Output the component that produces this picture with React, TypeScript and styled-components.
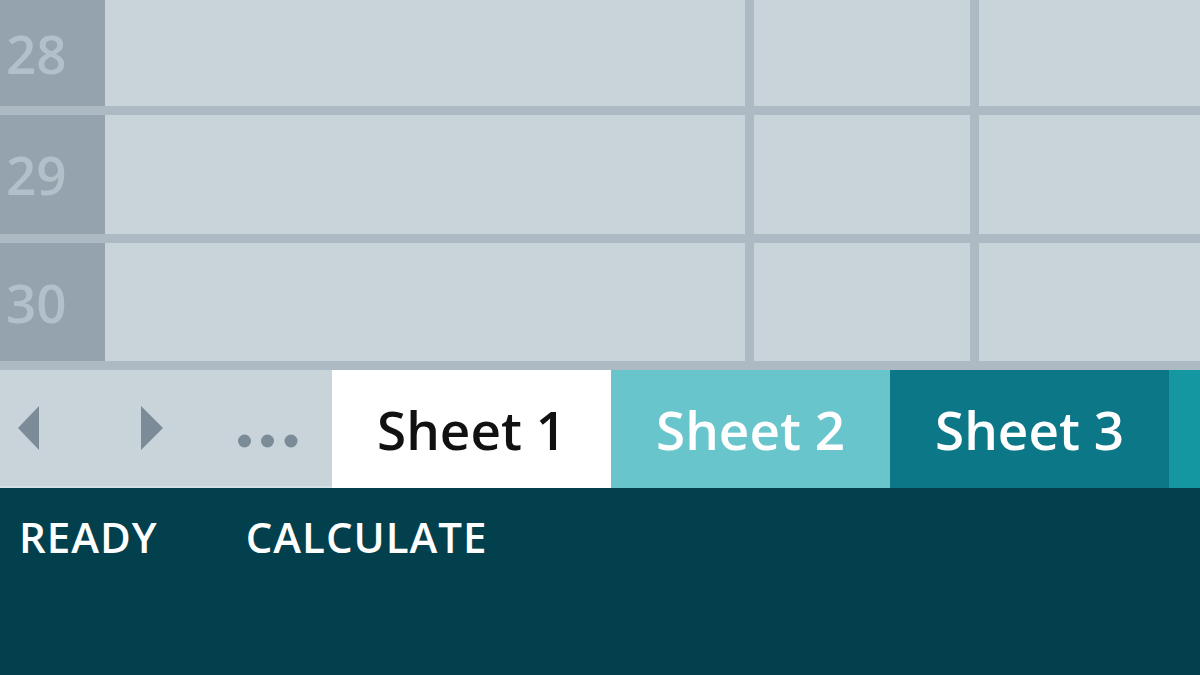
import React from 'react';
import styled, { createGlobalStyle } from 'styled-components';

const GlobalStyle = createGlobalStyle`
  html, body {
    margin: 0;
    padding: 0;
    overflow: hidden;
  }
  body {
    font-family: "Open Sans", "Liberation Sans", sans-serif;
  }
`;

const Page = styled.div`
  width: 1200px;
  height: 675px;
  display: flex;
  flex-direction: column;
  background-color: #01404c;
`;

const Grid = styled.div`
  display: grid;
  grid-template-columns: 105px 640px 225px 1fr;
  grid-template-rows: 106px 119px 118px;
  row-gap: 9px;
  padding-bottom: 9px;
  background-color: #adbac4;
`;

const RowHeader = styled.div`
  display: flex;
  align-items: center;
  padding-left: 6px;
  background-color: #94a3ad;
  color: #b3c0c9;
  font-size: 53px;
  font-weight: 600;
`;

const Cell = styled.div<{ $divider?: boolean }>`
  background-color: #c8d3da;
  border-left: ${({ $divider }) => ($divider ? '9px solid #adbac4' : 'none')};
`;

const TabBar = styled.div`
  display: flex;
  height: 118px;
`;

const Nav = styled.div`
  width: 332px;
  display: flex;
  align-items: center;
  padding-left: 18px;
  box-sizing: border-box;
  background-color: #c8d3da;
  border-bottom: 2px solid #d6dfe4;
`;

const NavIcon = styled.svg<{ $offset: number }>`
  display: block;
  margin-left: ${({ $offset }) => $offset}px;
  fill: #7b8c98;
`;

const Tab = styled.div<{ $bg: string; $fg: string }>`
  width: 279px;
  display: flex;
  align-items: center;
  justify-content: center;
  background-color: ${({ $bg }) => $bg};
  color: ${({ $fg }) => $fg};
  font-size: 53px;
  font-weight: 600;
`;

const TabRest = styled.div`
  flex: 1;
  background-color: #1597a2;
`;

const StatusBar = styled.div`
  flex: 1;
  display: flex;
  align-items: flex-start;
  padding: 20px 0 0 19px;
  color: #ffffff;
  font-size: 42px;
  font-weight: 600;
  letter-spacing: 1px;
`;

const StatusItem = styled.span`
  margin-right: 88px;
`;

const rows = ['28', '29', '30'];

const App = () => (
  <>
    <GlobalStyle />
    <Page>
      <Grid>
        {rows.map((n) => (
          <React.Fragment key={n}>
            <RowHeader>{n}</RowHeader>
            <Cell />
            <Cell $divider />
            <Cell $divider />
          </React.Fragment>
        ))}
      </Grid>
      <TabBar>
        <Nav>
          <NavIcon $offset={0} width="21" height="44" viewBox="0 0 21 44">
            <polygon points="0,22 21,0 21,44" />
          </NavIcon>
          <NavIcon $offset={102} width="22" height="44" viewBox="0 0 22 44">
            <polygon points="0,0 22,22 0,44" />
          </NavIcon>
          <NavIcon $offset={75} width="60" height="44" viewBox="0 0 60 44">
            <circle cx="6.5" cy="35" r="6.5" />
            <circle cx="29.5" cy="35" r="6.5" />
            <circle cx="53" cy="35" r="6.5" />
          </NavIcon>
        </Nav>
        <Tab $bg="#ffffff" $fg="#111111">Sheet 1</Tab>
        <Tab $bg="#69c5cc" $fg="#ffffff">Sheet 2</Tab>
        <Tab $bg="#0b7787" $fg="#ffffff">Sheet 3</Tab>
        <TabRest />
      </TabBar>
      <StatusBar>
        <StatusItem>READY</StatusItem>
        <StatusItem>CALCULATE</StatusItem>
      </StatusBar>
    </Page>
  </>
);

export default App;
